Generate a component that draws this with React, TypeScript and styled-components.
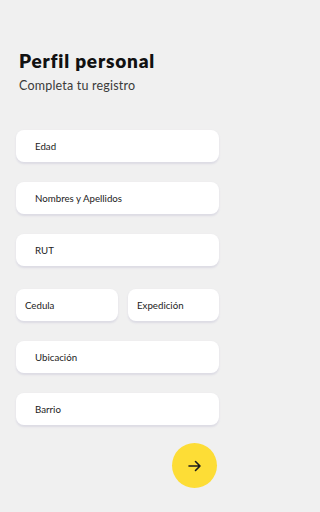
import styled, { createGlobalStyle } from 'styled-components';

const GlobalStyle = createGlobalStyle`
	html, body {
		margin: 0;
		padding: 0;
		background: #f0f0f0;
	}
	* {
		box-sizing: border-box;
	}
`;

const fields = ['Edad', 'Nombres y Apellidos', 'RUT'];

function App() {
	return (
		<Layout>
			<GlobalStyle />
			<Header>
				<Title>Perfil personal</Title>
				<Subtitle>Completa tu registro</Subtitle>
			</Header>

			<Form>
				{fields.map(label => (
					<Field key={label}>{label}</Field>
				))}
				<Row>
					<Field $compact $width="102px">
						Cedula
					</Field>
					<Field $compact $width="91px">
						Expedición
					</Field>
				</Row>
				<Field>Ubicación</Field>
				<Field>Barrio</Field>
			</Form>

			<Footer>
				<NextButton aria-label="Siguiente">
					<svg width="14" height="12" viewBox="0 0 14 12" fill="none">
						<path d="M1 6h11M7.5 1.5L12 6l-4.5 4.5" stroke="#1c1c1c" strokeWidth="1.6" strokeLinecap="round" strokeLinejoin="round" />
					</svg>
				</NextButton>
			</Footer>
		</Layout>
	);
}

const Layout = styled.div`
	display: flex;
	flex-direction: column;
	width: 236px;
	height: 512px;
	padding: 50px 17px 0 16px;
	font-family: 'Lato', 'Open Sans', sans-serif;
	color: #1c1c1c;
`;

const Header = styled.div`
	display: flex;
	flex-direction: column;
	padding-left: 3px;
`;

const Title = styled.h1`
	margin: 0;
	font-size: 19px;
	font-weight: 800;
	letter-spacing: 0.8px;
	line-height: 22px;
	color: #111;
`;

const Subtitle = styled.p`
	margin: 6px 0 0;
	font-size: 12.5px;
	letter-spacing: 0.2px;
	line-height: 16px;
	color: #3a3a3a;
`;

const Form = styled.div`
	display: flex;
	flex-direction: column;
	gap: 20px;
	margin-top: 36px;
`;

const Row = styled.div`
	display: flex;
	justify-content: space-between;
	margin-top: 3px;
`;

const Field = styled.div<{ $compact?: boolean; $width?: string }>`
	display: flex;
	align-items: center;
	flex: none;
	width: ${props => props.$width ?? '100%'};
	height: 32px;
	padding-left: ${props => (props.$compact ? '9px' : '19px')};
	background: #ffffff;
	border-radius: 8px;
	box-shadow: 0 1.5px 2px rgba(120, 110, 170, 0.16);
	font-size: 9.7px;
	color: #222;
`;

const Footer = styled.div`
	display: flex;
	justify-content: flex-end;
	margin-top: 18px;
	padding-right: 2px;
`;

const NextButton = styled.button`
	display: flex;
	align-items: center;
	justify-content: center;
	width: 45px;
	height: 45px;
	border: none;
	border-radius: 50%;
	background: #fddd36;
	padding: 0;
	cursor: pointer;
`;

export default App;
